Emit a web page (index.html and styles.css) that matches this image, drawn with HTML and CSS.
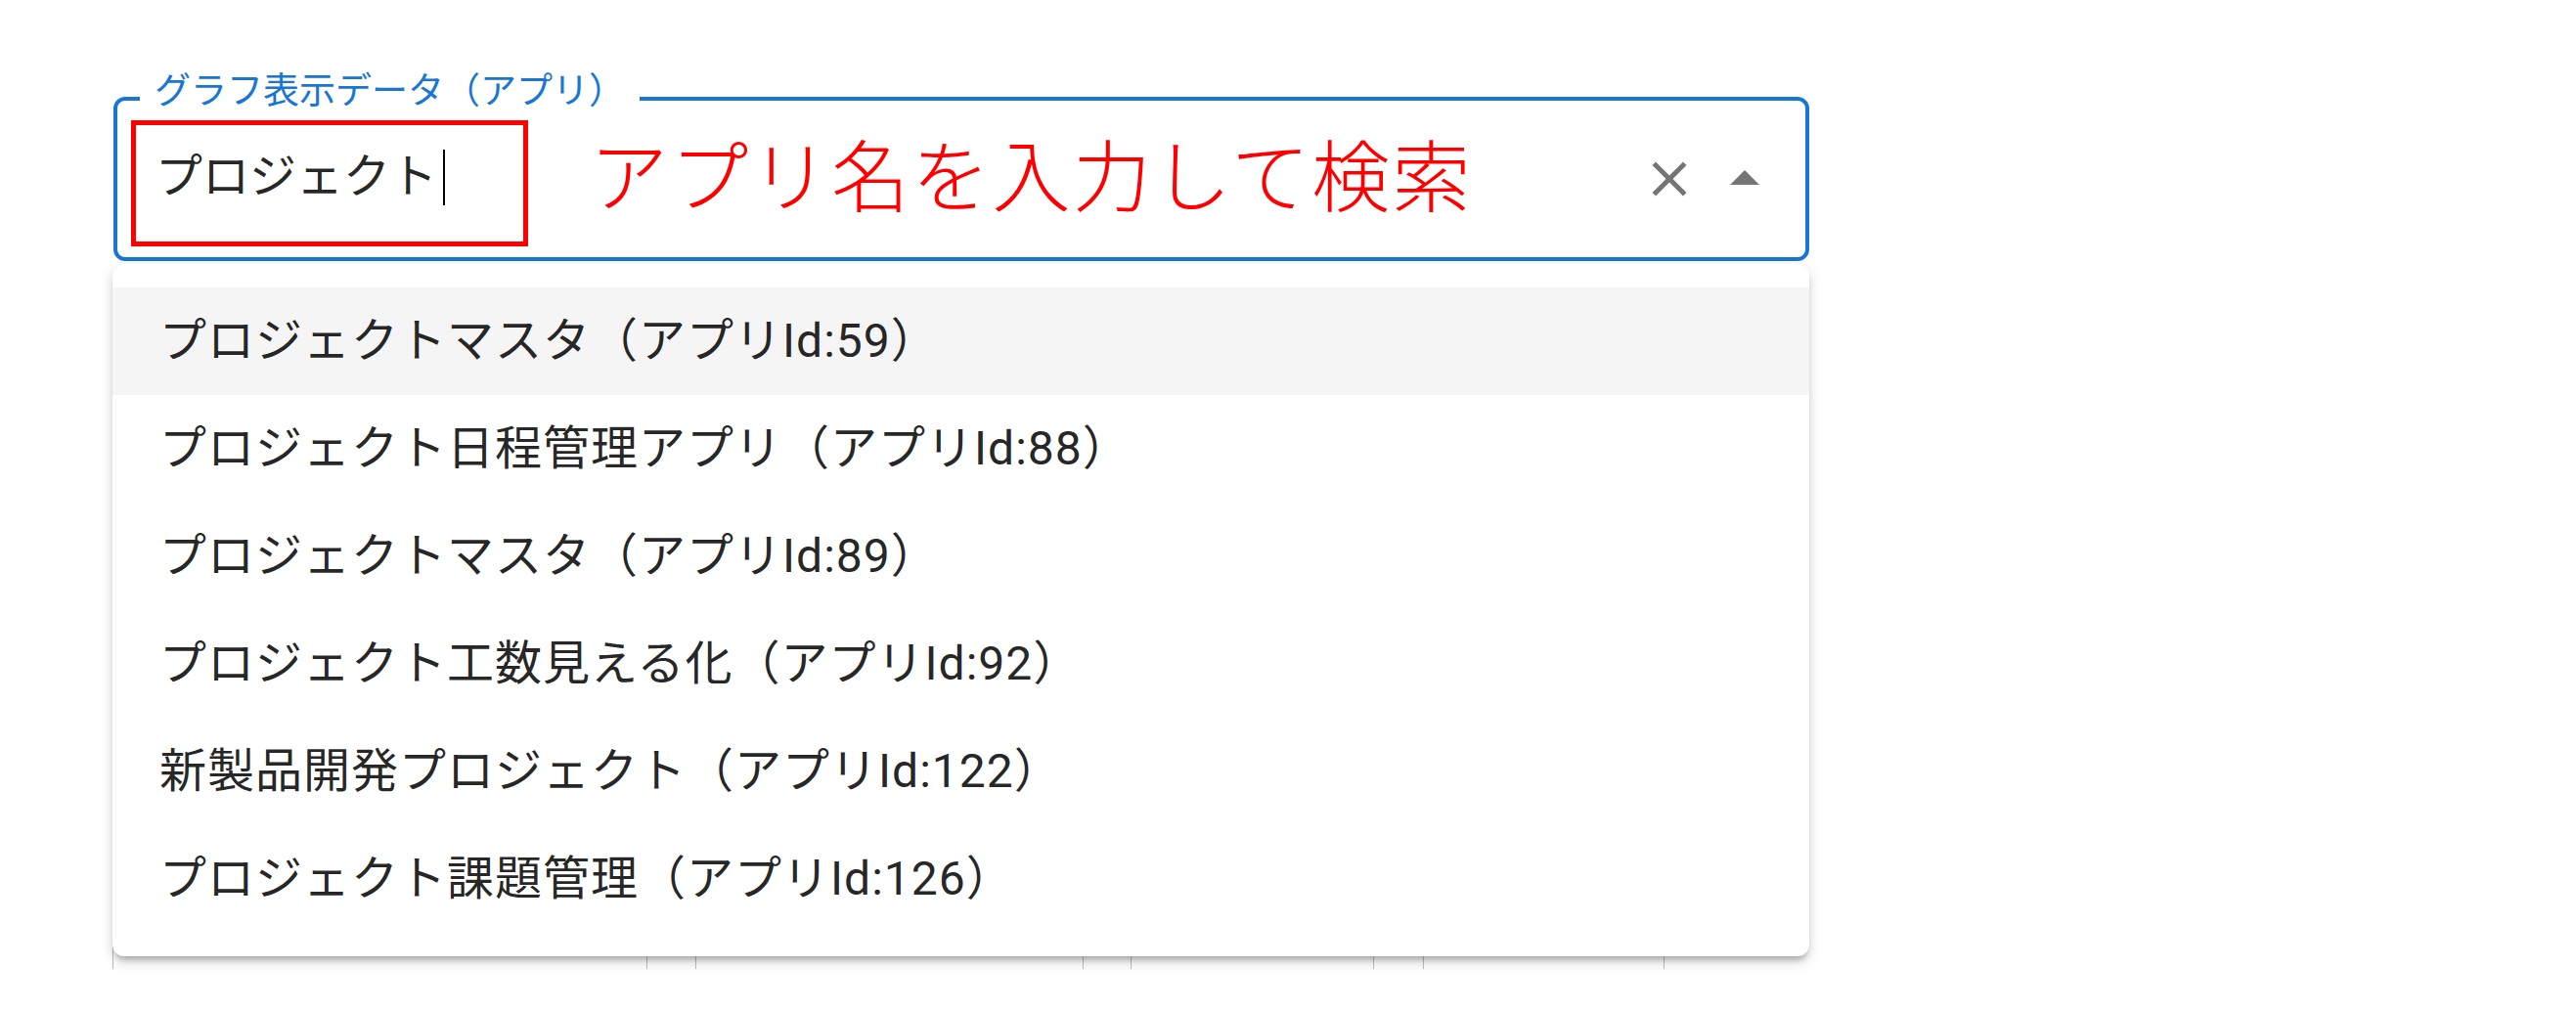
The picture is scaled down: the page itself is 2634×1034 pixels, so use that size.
FILE: index.html
```html
<!DOCTYPE html>
<html lang="ja">
<head>
<meta charset="utf-8">
<title>グラフ表示データ</title>
<link rel="stylesheet" href="styles.css">
</head>
<body>
<div class="page">
  <div class="combo">
    <div class="field">
      <span class="field-label">グラフ表示データ（アプリ）</span>
      <div class="field-input"><span class="value">プロジェクト</span><span class="caret"></span></div>
      <div class="adorn">
        <span class="icon-btn clear"><svg viewBox="0 0 24 24"><path d="M19 6.41 17.59 5 12 10.59 6.41 5 5 6.41 10.59 12 5 17.59 6.41 19 12 13.41 17.59 19 19 17.59 13.41 12z"/></svg></span>
        <span class="icon-btn popup"><svg viewBox="0 0 24 24"><path d="m7 14 5-5 5 5z"/></svg></span>
      </div>
    </div>
    <ul class="listbox">
      <li class="option focused">プロジェクトマスタ（アプリId:59）</li>
      <li class="option">プロジェクト日程管理アプリ（アプリId:88）</li>
      <li class="option">プロジェクトマスタ（アプリId:89）</li>
      <li class="option">プロジェクト工数見える化（アプリId:92）</li>
      <li class="option">新製品開発プロジェクト（アプリId:122）</li>
      <li class="option">プロジェクト課題管理（アプリId:126）</li>
    </ul>
  </div>
  <div class="grid-strip">
    <div class="cell"></div><div class="cell"></div><div class="cell"></div><div class="cell"></div>
    <div class="cell"></div><div class="cell"></div><div class="cell"></div><div class="cell"></div>
  </div>
  <div class="note-box"></div>
  <div class="note-text">アプリ名を入力して検索</div>
</div>
</body>
</html>
```
FILE: styles.css
```css
html, body {
  margin: 0;
  background: #ffffff;
}

.page {
  position: relative;
  box-sizing: border-box;
  height: 1034px;
  padding: 99px 0 0 116px;
  overflow: hidden;
  font-family: Roboto, "Noto Sans CJK JP", sans-serif;
  color: rgba(0, 0, 0, 0.87);
}

.combo {
  position: relative;
  width: 1734px;
  z-index: 2;
}

.field {
  position: relative;
  box-sizing: border-box;
  height: 168px;
  border: 4px solid #1976d2;
  border-radius: 12px;
  display: flex;
  align-items: center;
  padding: 0 26px 0 39px;
}

.field-label {
  position: absolute;
  top: -31px;
  left: 23px;
  padding: 0 15px;
  background: #ffffff;
  color: #1976d2;
  font-size: 37px;
  line-height: 44px;
  white-space: nowrap;
}

.field-input {
  flex: 1;
  display: flex;
  align-items: center;
  font-size: 48px;
  line-height: 1;
  margin-top: -4px;
}

.caret {
  width: 2px;
  height: 57px;
  margin-left: 6px;
  background: #000000;
}

.adorn {
  display: flex;
  align-items: center;
  gap: 11px;
}

.icon-btn {
  display: flex;
}

.icon-btn svg {
  fill: rgba(0, 0, 0, 0.54);
}

.clear svg {
  width: 60px;
  height: 60px;
}

.popup svg {
  width: 72px;
  height: 72px;
}

.listbox {
  position: absolute;
  top: calc(100% + 3px);
  left: -1px;
  width: 1735px;
  margin: 0;
  padding: 24px 0;
  list-style: none;
  background: #ffffff;
  border-radius: 12px;
  box-shadow: 0 6px 6px -3px rgba(0, 0, 0, 0.28), 0 8px 12px 1px rgba(0, 0, 0, 0.08), 0 2px 14px 2px rgba(0, 0, 0, 0.06);
}

.option {
  display: flex;
  align-items: center;
  height: 110px;
  padding: 0 48px;
  font-size: 48px;
  line-height: 1;
  letter-spacing: 1px;
  white-space: nowrap;
}

.option.focused {
  background: #f5f5f5;
}

.grid-strip {
  display: grid;
  grid-template-columns: 546px 50px 396px 49px 248px 51px 246px 149px;
  width: 1735px;
  height: 671px;
  margin: 53px 0 0 -1px;
}

.cell {
  border-left: 1px solid #bdbdbd;
}

.note-box {
  position: absolute;
  left: 134px;
  top: 123px;
  width: 406px;
  height: 129px;
  box-sizing: border-box;
  border: 5px solid #ff0000;
  z-index: 3;
}

.note-text {
  position: absolute;
  left: 603px;
  top: 135px;
  font-family: "Noto Sans CJK JP", sans-serif;
  font-size: 80px;
  font-weight: 300;
  line-height: 1;
  letter-spacing: 2.3px;
  color: #ff0000;
  white-space: nowrap;
  z-index: 3;
}
```
